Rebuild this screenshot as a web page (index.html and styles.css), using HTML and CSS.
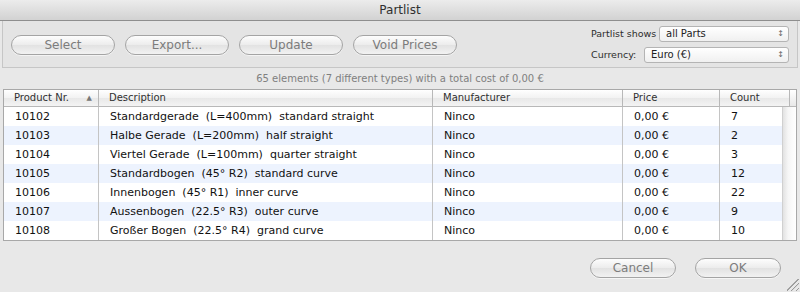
FILE: index.html
```html
<!DOCTYPE html>
<html>
<head>
    <title>Partlist</title>
    <link rel="stylesheet" href="styles.css">
</head>
<body>
    <div class="window">
        <div class="titlebar">Partlist</div>

        <div class="toolbar">
            <div class="buttons">
                <button class="pill">Select</button>
                <button class="pill">Export...</button>
                <button class="pill">Update</button>
                <button class="pill">Void Prices</button>
            </div>
            <div class="options">
                <div class="option">
                    <span class="label">Partlist shows</span>
                    <div class="popup popup-wide">all Parts<span class="arrows">&#8597;</span></div>
                </div>
                <div class="option">
                    <span class="label">Currency:</span>
                    <div class="popup popup-narrow">Euro (&euro;)<span class="arrows">&#8597;</span></div>
                </div>
            </div>
        </div>

        <p class="summary">65 elements (7 different types) with a total cost of 0,00 &euro;</p>

        <div class="list">
            <div class="list-head">
                <div class="hcell sorted">Product Nr.<span class="sort">&#9650;</span></div>
                <div class="hcell">Description</div>
                <div class="hcell">Manufacturer</div>
                <div class="hcell">Price</div>
                <div class="hcell">Count</div>
                <div class="hcorner"></div>
            </div>
            <div class="list-body">
                <div class="rows" id="rows"></div>
                <div class="scroller"></div>
            </div>
        </div>

        <div class="footer">
            <button class="pill pill-footer">Cancel</button>
            <button class="pill pill-footer">OK</button>
            <div class="grip"></div>
        </div>
    </div>
  <script>
    var parts = [
      { nr: "10102", desc: "Standardgerade  (L=400mm)  standard straight", count: 7 },
      { nr: "10103", desc: "Halbe Gerade  (L=200mm)  half straight", count: 2 },
      { nr: "10104", desc: "Viertel Gerade  (L=100mm)  quarter straight", count: 3 },
      { nr: "10105", desc: "Standardbogen  (45° R2)  standard curve", count: 12 },
      { nr: "10106", desc: "Innenbogen  (45° R1)  inner curve", count: 22 },
      { nr: "10107", desc: "Aussenbogen  (22.5° R3)  outer curve", count: 9 },
      { nr: "10108", desc: "Großer Bogen  (22.5° R4)  grand curve", count: 10 }
    ];

    // Tabellenzeilen aufbauen
    var rows = document.getElementById("rows");
    for (var i = 0; i < parts.length; i++) {
      var row = document.createElement("div");
      row.className = "row" + (i % 2 === 1 ? " alt" : "");
      var cells = [parts[i].nr, parts[i].desc, "Ninco", "0,00 €", parts[i].count];
      for (var j = 0; j < cells.length; j++) {
        var cell = document.createElement("div");
        cell.className = "cell";
        cell.textContent = cells[j];
        row.appendChild(cell);
      }
      rows.appendChild(row);
    }
  </script>
</body>
</html>
```

FILE: styles.css
```css
body {
    margin: 0;
    padding: 0;
    font-family: "DejaVu Sans", Verdana, sans-serif;
    background-color: #e8e8e8;
}
.window {
    width: 800px;
    height: 292px;
    display: flex;
    flex-direction: column;
    background-color: #e8e8e8;
    overflow: hidden;
}
.titlebar {
    height: 20px;
    line-height: 20px;
    text-align: center;
    font-size: 12px;
    color: #303030;
    background: linear-gradient(#ececec, #d2d2d2);
    border-bottom: 1px solid #8e8e8e;
}
.toolbar {
    margin: 0 2px;
    height: 46px;
    display: flex;
    justify-content: space-between;
    align-items: center;
    border: 1px solid #c6c6c6;
    border-top: none;
    background-color: #e4e4e4;
}
.buttons {
    display: flex;
    gap: 10px;
    padding-left: 8px;
    padding-top: 2px;
}
.pill {
    width: 104px;
    height: 20px;
    padding: 0;
    font-family: "DejaVu Sans", Verdana, sans-serif;
    font-size: 12px;
    color: #7c7c7c;
    border: 1px solid #a4a4a4;
    border-radius: 10px;
    background: linear-gradient(#fdfdfd, #ececec 50%, #e2e2e2 51%, #f2f2f2);
    box-shadow: 0 1px 0 rgba(255, 255, 255, 0.6);
}
.options {
    display: flex;
    flex-direction: column;
    gap: 5px;
    padding-right: 8px;
}
.option {
    display: flex;
    justify-content: space-between;
    align-items: center;
    width: 198px;
}
.label {
    font-size: 9.5px;
    color: #2c2c2c;
    white-space: nowrap;
}
.popup {
    height: 14px;
    line-height: 14px;
    font-size: 10px;
    color: #222;
    padding-left: 6px;
    position: relative;
    border: 1px solid #b4b4b4;
    border-radius: 3px;
    background: linear-gradient(#ffffff, #f0f0f0);
}
.popup-wide {
    width: 122px;
}
.popup-narrow {
    width: 137px;
}
.arrows {
    position: absolute;
    right: 4px;
    top: 0;
    font-size: 8px;
    color: #666;
}
.summary {
    margin: 5px 0 0 0;
    height: 16px;
    text-align: center;
    font-size: 10px;
    color: #808080;
}
.list {
    margin: 0 3px;
    border: 1px solid #a8a8a8;
    background-color: #ffffff;
}
.list-head {
    display: grid;
    grid-template-columns: 95px 334px 190px 97px 70px 1fr;
    height: 16px;
    border-bottom: 1px solid #b8b8b8;
    background: linear-gradient(#ffffff, #f2f2f2 50%, #e8e8e8 51%, #f4f4f4);
}
.hcell {
    font-size: 10px;
    line-height: 16px;
    color: #303030;
    padding-left: 10px;
    border-right: 1px solid #b8b8b8;
    position: relative;
}
.sort {
    position: absolute;
    right: 6px;
    top: 0;
    font-size: 7px;
    color: #777;
}
.hcorner {
    background: linear-gradient(#ffffff, #e8e8e8);
}
.list-body {
    display: flex;
}
.rows {
    flex: 1;
}
.row {
    display: grid;
    grid-template-columns: 95px 334px 190px 97px 1fr;
    height: 19px;
}
.row.alt {
    background-color: #edf3fe;
}
.cell {
    font-size: 11px;
    line-height: 19px;
    color: #111;
    padding-left: 11px;
    white-space: pre;
    border-right: 1px solid #c4c4c4;
}
.cell:last-child {
    border-right: none;
}
.scroller {
    width: 13px;
    border-left: 1px solid #d0d0d0;
    background: linear-gradient(to right, #e2e2e2, #f6f6f6 40%, #ffffff);
}
.footer {
    flex: 1;
    display: flex;
    justify-content: flex-end;
    align-items: flex-start;
    gap: 19px;
    padding: 17px 19px 0 0;
    position: relative;
}
.pill-footer {
    width: 86px;
    height: 20px;
    font-size: 12px;
}
.grip {
    position: absolute;
    right: 1px;
    bottom: 1px;
    width: 12px;
    height: 12px;
    background: linear-gradient(135deg, transparent 45%, #9a9a9a 46%, #9a9a9a 50%, transparent 51%, transparent 65%, #9a9a9a 66%, #9a9a9a 70%, transparent 71%, transparent 85%, #9a9a9a 86%, #9a9a9a 90%, transparent 91%);
}
```
